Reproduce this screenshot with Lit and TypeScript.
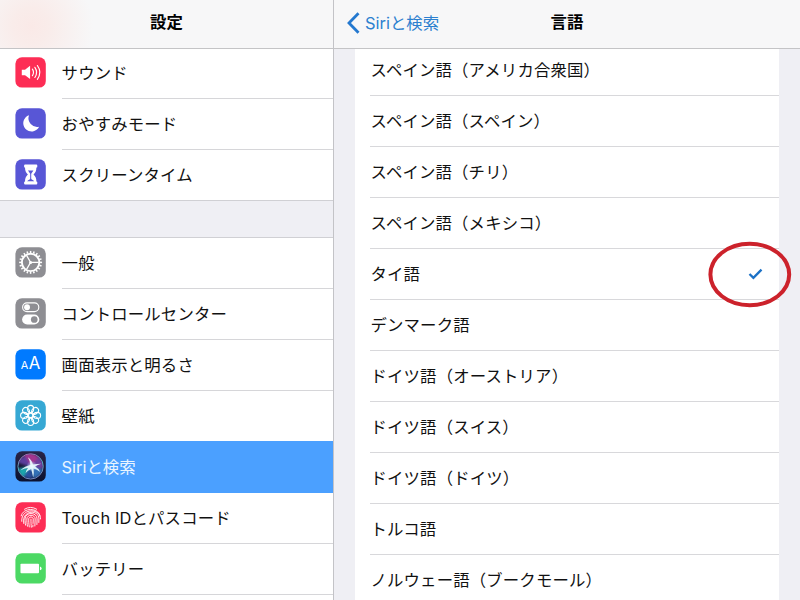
import { LitElement, html, css, svg, nothing } from "lit";
import { customElement, property } from "lit/decorators.js";

const angles = (n: number) => Array.from({ length: n }, (_, i) => (i * 360) / n);

const ICONS: Record<string, unknown> = {
  sound: svg`
    <rect width="30" height="30" rx="6.5" fill="#fd2d55"/>
    <path d="M6.3 12.3h3.2l5-3.8v13l-5-3.8H6.3z" fill="#fff"/>
    <g fill="none" stroke="#fff" stroke-width="1.15" stroke-linecap="round">
      <path d="M16.8 11.8q2.1 3.2 0 6.4"/><path d="M19.2 10q3.5 5 0 10"/><path d="M21.7 8.2q4.9 6.8 0 13.6"/>
    </g>`,
  moon: svg`
    <rect width="30" height="30" rx="6.5" fill="#5856d6"/>
    <path d="M13.4 7a8.2 8.2 0 1 0 10 11.2A8.6 8.6 0 0 1 13.4 7z" fill="#fff"/>`,
  hourglass: svg`
    <rect width="30" height="30" rx="6.5" fill="#5856d6"/>
    <path d="M9.5 5.2h11.2q.9 0 .9.9v1.3q0 .9-.9.9c0 3.4-.8 4.7-2.8 6.8 2 2.1 2.8 3.4 2.8 6.8q.9 0 .9.9v1.3q0 .9-.9.9H9.500q-.9 0-.9-.9v-1.3q0-.9.9-.9c0-3.4.8-4.700 2.800-6.800-2-2.100-2.800-3.400-2.800-6.800q-.9 0-.9-.9V6.100q0-.9.9-.9z" fill="#fff"/>
    <path d="M12.4 11.2h5.4l-1.9 2.7q-.3.4-.3 1v4.1c0 1 1.7 1.2 3 2.7h-7c1.3-1.5 3-1.7 3-2.7v-4.1q0-.6-.3-1z" fill="#5856d6"/>`,
  gear: svg`
    <rect width="30" height="30" rx="6.5" fill="#8e8e93"/>
    <g fill="none" stroke="#fff">
      <circle cx="15" cy="15" r="8.600" stroke-width="1.9"/>
      ${angles(20).map((a) => svg`<path d="M15 5.8V3.700" stroke-width="1.5" transform="rotate(${a} 15 15)"/>`)}
      <path d="M15 15h8M15 15l-4 -6.900M15 15l-4 6.900" stroke-width="1.2"/>
    </g>
    <circle cx="15" cy="15" r="1.5" fill="#fff"/>`,
  control: svg`
    <rect width="30" height="30" rx="6.5" fill="#8e8e93"/>
    <rect x="7.1" y="4.600" width="16" height="8.600" rx="4.300" fill="none" stroke="#fff" stroke-width="1.1"/>
    <circle cx="11.5" cy="8.9" r="2.9" fill="#fff"/>
    <rect x="6.6" y="16" width="17" height="10" rx="5" fill="#fff"/>
    <circle cx="18.6" cy="21" r="3.3" fill="#8e8e93"/>`,
  display: svg`
    <rect width="30" height="30" rx="6.5" fill="#007aff"/>
    <text x="5.4" y="19.8" font-size="10.8" class="glyph">A</text>
    <text x="13.2" y="19.8" font-size="16.5" class="glyph">A</text>`,
  wallpaper: svg`
    <rect width="30" height="30" rx="6.5" fill="#36a8d4"/>
    <g fill="none" stroke="#fff" stroke-width="1.05">
      ${angles(8).map((a) => svg`<ellipse cx="15" cy="8.6" rx="3" ry="3.5" transform="rotate(${a} 15 15)"/>`)}
      ${angles(8).map((a) => svg`<path d="M15 12.8V10.2" transform="rotate(${a + 22.5} 15 15)"/>`)}
      <circle cx="15" cy="15" r="2.1"/>
    </g>`,
  siri: svg`
    <defs>
      <linearGradient id="bg" x1="0" y1="0" x2="0" y2="1"><stop offset="0" stop-color="#292447"/><stop offset="1" stop-color="#0b1230"/></linearGradient>
      <linearGradient id="ring" x1="0" y1="0" x2=".3" y2="1"><stop offset="0" stop-color="#b764b4"/><stop offset=".55" stop-color="#56b9c6"/><stop offset="1" stop-color="#7c8fc9"/></linearGradient>
      <radialGradient id="core"><stop offset="0" stop-color="#fff"/><stop offset=".3" stop-color="#dffaff" stop-opacity=".7"/><stop offset="1" stop-color="#9bf" stop-opacity="0"/></radialGradient>
      <clipPath id="orb"><circle cx="15" cy="15" r="12.3"/></clipPath>
      <filter id="soft" x="-20%" y="-20%" width="140%" height="140%"><feGaussianBlur stdDeviation=".9"/></filter>
    </defs>
    <rect width="30" height="30" rx="6.5" fill="url(#bg)"/>
    <g clip-path="url(#orb)">
      <g filter="url(#soft)">
        <path d="M15 16L8 3Q17 0 23 6z" fill="#a3358f"/>
        <path d="M15 16L23 5Q28 9 28 17z" fill="#6d3f9d"/>
        <path d="M16 16l-14-5q3-6 8-6z" fill="#5c3c9b"/>
        <path d="M16 15L3 17q0 6 5 9z" fill="#1ea5ac"/>
        <path d="M15 15L8 25q7 4 9 1z" fill="#294f9e"/>
        <path d="M15 14l3 13q8-3 9-9z" fill="#3270b5"/>
      </g>
      <circle cx="16.2" cy="14.8" r="5.5" fill="url(#core)"/>
      <path d="M5 18.8Q9.500 14.400 14.800 13.600Q14.600 10 12.300 6Q16.400 9 17.300 13.200Q21 12.300 25.500 12.300Q22 13.500 19.400 15.100Q22.500 16.500 24.500 20.500Q21 17.600 17.900 17Q18.600 21 17.600 26Q16.400 21 15.600 17.600Q12 19 10 21.500Q10.800 18.200 12.500 16.700Q8.500 17 5 18.800z" fill="#eafcff" opacity=".9"/>
    </g>
    <circle cx="15" cy="15" r="12.5" fill="none" stroke="url(#ring)" stroke-width=".9"/>`,
  touch: svg`
    <rect width="30" height="30" rx="6.5" fill="#fd2d55"/>
    <g fill="none" stroke="#fff" stroke-width=".9" stroke-linecap="round">
      <path d="M9 6.9Q15 3.2 21 6.9"/>
      <path d="M5.7 13.5C7.5 5 22.5 5 24.3 13.5"/>
      <path d="M6.3 18.9C5 5.5 25 5.2 24.8 16.5"/>
      <path d="M8.2 21C5.7 7.5 23 6.5 23.2 16.3L23.1 20"/>
      <path d="M10 22.6C9.7 20 9.5 19 9.5 16.5C9.5 9.4 21.4 9.4 21.4 16.5L21.2 22"/>
      <path d="M11.9 23.7C11.4 21 11.3 19 11.3 16.6C11.3 11.7 19.5 11.7 19.5 16.6L19.2 23.5"/>
      <path d="M13.7 24.4C13.2 21 13.1 19 13.1 16.7C13.1 14 17.6 14 17.6 16.7L17.4 21"/>
      <path d="M15.35 16.7C15.35 20 15.5 22 15.7 24.7M17.3 22.5L17.2 24.3"/>
    </g>`,
  battery: svg`
    <rect width="30" height="30" rx="6.5" fill="#4cd964"/>
    <rect x="5" y="10.3" width="18.3" height="9.4" rx=".9" fill="#fff"/>
    <path d="M24.2 13.1q1.7.3 1.7 1.9t-1.7 1.9z" fill="#fff"/>`,
};

interface Setting { icon: string; label: string; selected?: boolean }

const GROUPS: Setting[][] = [
  [
    { icon: "sound", label: "サウンド" },
    { icon: "moon", label: "おやすみモード" },
    { icon: "hourglass", label: "スクリーンタイム" },
  ],
  [
    { icon: "gear", label: "一般" },
    { icon: "control", label: "コントロールセンター" },
    { icon: "display", label: "画面表示と明るさ" },
    { icon: "wallpaper", label: "壁紙" },
    { icon: "siri", label: "Siriと検索", selected: true },
    { icon: "touch", label: "Touch IDとパスコード" },
    { icon: "battery", label: "バッテリー" },
  ],
];

const LANGUAGES = [
  "スペイン語（アメリカ合衆国）",
  "スペイン語（スペイン）",
  "スペイン語（チリ）",
  "スペイン語（メキシコ）",
  "タイ語",
  "デンマーク語",
  "ドイツ語（オーストリア）",
  "ドイツ語（スイス）",
  "ドイツ語（ドイツ）",
  "トルコ語",
  "ノルウェー語（ブークモール）",
];

@customElement("setting-row")
class SettingRow extends LitElement {
  @property() icon = "";
  @property() label = "";
  @property({ type: Boolean, reflect: true }) selected = false;
  @property({ type: Boolean, reflect: true }) last = false;

  static styles = css`
    :host { display: flex; box-sizing: border-box; height: 51px; padding-left: 15px; }
    :host([selected]) { background: #4ba0ff; color: #e9f5ff; box-shadow: 0 -1px #4ba0ff; letter-spacing: 0; }
    svg { display: block; flex: none; width: 31px; height: 31px; margin: 9px 15.6px 0 0; }
    .glyph { font-family: Inter, "Liberation Sans", sans-serif; letter-spacing: 0; fill: #fff; }
    .label { flex: 1; box-sizing: border-box; border-bottom: 1px solid #d6d6d9; line-height: 50px; }
    :host([last]) .label, :host([selected]) .label { border-color: transparent; }
  `;

  render() {
    return html`<svg viewBox="-.4 -.2 30.6 30.6">${ICONS[this.icon]}</svg><div class="label">${this.label}</div>`;
  }
}

@customElement("app-root")
class AppRoot extends LitElement {
  static styles = css`
    :host {
      position: relative; display: flex; box-sizing: border-box; width: 800px; height: 600px; overflow: hidden;
      isolation: isolate; background: #efeff4; color: #111;
      font: 400 16.4px/1 Inter, "Noto Sans CJK JP", sans-serif; letter-spacing: .15px;
    }
    .side { display: flex; flex-direction: column; width: 333px; border-right: 1px solid #c3c3c7; }
    .main { display: flex; flex-direction: column; flex: 1; }
    header { position: relative; z-index: 1; box-sizing: border-box; flex: none; height: 49px; border-bottom: 1px solid #c4c4c6; background: #f7f7f8; line-height: 45px; }
    .title { font-weight: 700; color: #000; text-align: center; letter-spacing: 0; }
    .side header { background: radial-gradient(circle at 31px 26px, #fae9e7 0, #f9ecea 18px, #f7f7f8 62px); }
    .main header { display: grid; grid-template-columns: 1fr auto 1fr; }
    .back { display: flex; align-items: center; padding-left: 13px; color: #2c80cf; letter-spacing: 0; line-height: 44px; }
    .back svg { width: 13px; height: 22px; margin-right: 5px; margin-top: -3px; }
    .back span { margin-top: -3px; }
    .rows { display: flex; flex-direction: column; flex: 1; margin-top: -1px; }
    .group { background: #fff; }
    .group + .group { flex: 1; margin-top: 36px; border-top: 1px solid #d0d0d4; }
    .group:first-of-type { box-shadow: inset 0 -1px #d0d0d4; }
    .list { flex: 1; margin: -4px 21px 0 20.5px; padding-left: 15.5px; background: #fff; overflow: hidden; }
    .lang { display: flex; justify-content: space-between; align-items: center; box-sizing: border-box; height: 51px; padding: 0 16px 0 .5px; border-bottom: 1px solid #d8d8db; line-height: 49px; white-space: nowrap; }
    .ellipse { position: absolute; left: 707px; top: 240px; width: 86px; height: 70px; }
  `;

  render() {
    return html`
      <div class="side">
        <header class="title">設定</header>
        <div class="rows">
          ${GROUPS.map((g, gi) => html`<div class="group">
            ${g.map((s, i) => html`<setting-row .icon=${s.icon} .label=${s.label} ?selected=${!!s.selected}
              ?last=${(gi === 0 && i === g.length - 1) || !!g[i + 1]?.selected}></setting-row>`)}
          </div>`)}
        </div>
      </div>
      <div class="main">
        <header>
          <div class="back">
            <svg viewBox="0 0 13 22"><path d="M11.5 1.2L2 11l9.5 9.8" fill="none" stroke="#2478cf" stroke-width="2.8"/></svg>
            <span>Siriと検索</span>
          </div>
          <div class="title">言語</div>
        </header>
        <div class="list">
          ${LANGUAGES.map((l) => html`<div class="lang"><span>${l}</span>${
            l === "タイ語"
              ? html`<svg width="15" height="12" viewBox="0 0 15 12"><path d="M1.5 6l3.9 3.9L13.5 1.6" fill="none" stroke="#1c71c6" stroke-width="2.3"/></svg>`
              : nothing
          }</div>`)}
        </div>
      </div>
      <svg class="ellipse" viewBox="0 0 86 70"><ellipse cx="42.8" cy="34.5" rx="39.4" ry="30.7" fill="none" stroke="#cc222b" stroke-width="4"/></svg>
    `;
  }
}
